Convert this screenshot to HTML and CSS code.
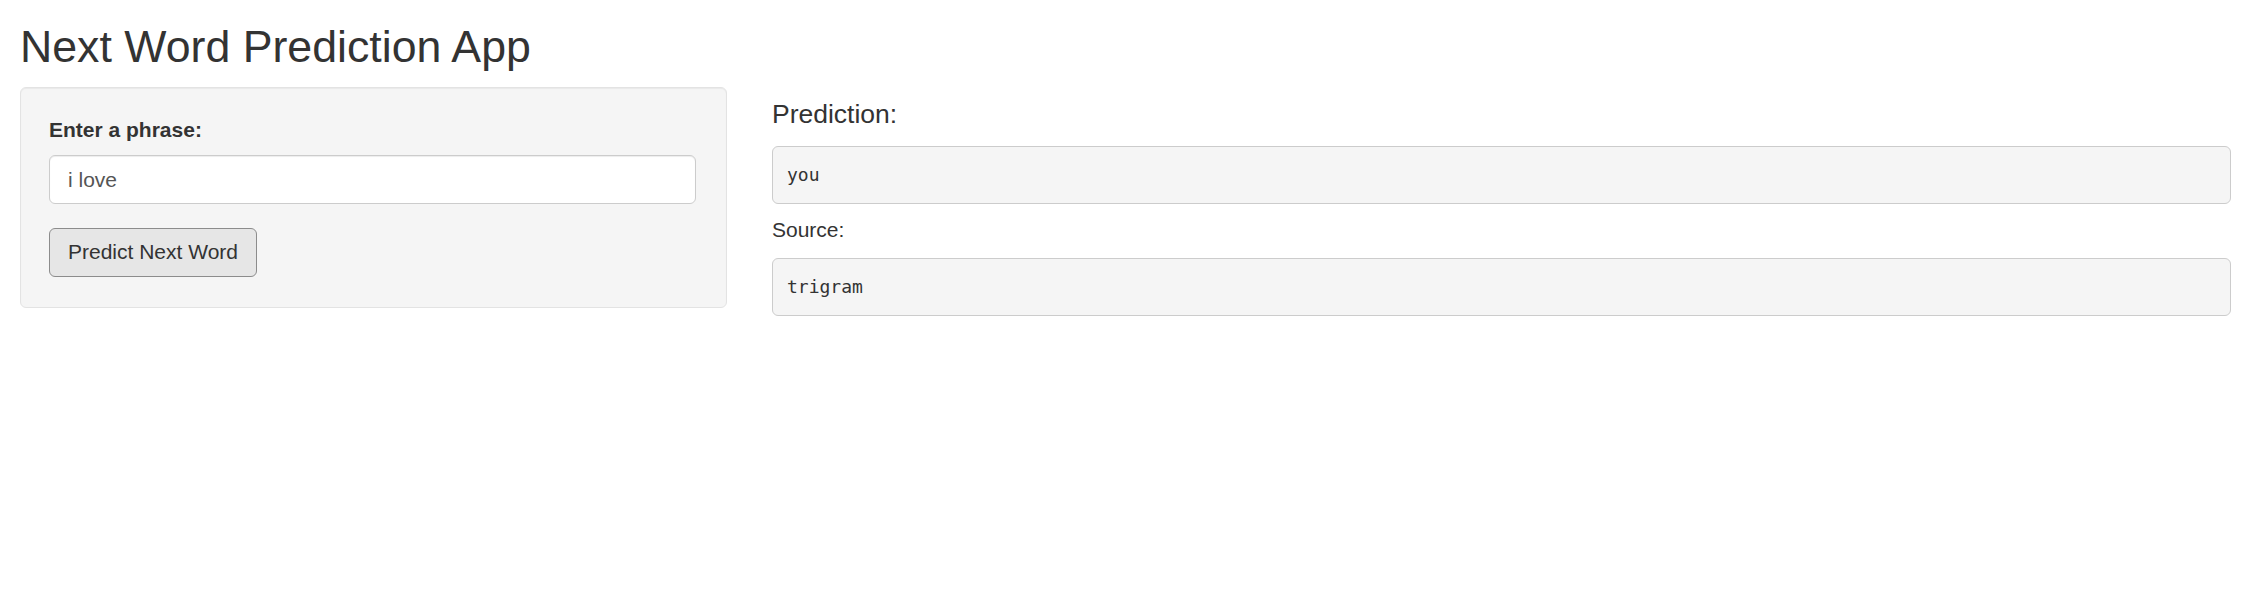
FILE: index.html
```html
<!DOCTYPE html>
<html lang="en">
<head>
<meta charset="utf-8">
<title>Next Word Prediction App</title>
<link rel="stylesheet" href="styles.css">
</head>
<body>
<div class="page">
  <h2 class="title">Next Word Prediction App</h2>
  <div class="row">
    <div class="well">
      <div class="form-group">
        <label class="control-label" for="phrase">Enter a phrase:</label>
        <input id="phrase" class="form-control" type="text" value="i love">
      </div>
      <button class="btn" type="button">Predict Next Word</button>
    </div>
    <div class="main">
      <h4 class="section-title">Prediction:</h4>
      <pre class="output">you</pre>
      <div class="plain">Source:</div>
      <pre class="output">trigram</pre>
    </div>
  </div>
</div>
</body>
</html>
```
FILE: styles.css
```css
* { box-sizing: border-box; }
html, body {
  margin: 0;
  padding: 0;
  background: #fff;
}
body {
  font-family: "Liberation Sans", Arial, Helvetica, sans-serif;
  font-size: 21px;
  line-height: 30px;
  color: #333;
}
.page {
  padding: 0 21px 0 20px;
}
.title {
  font-size: 44.7px;
  font-weight: 500;
  line-height: 49px;
  margin: 22px 0 16px 0;
  color: #333;
}
.row {
  display: grid;
  grid-template-columns: 707px 1fr;
  column-gap: 45px;
  align-items: start;
}
.well {
  background: #f5f5f5;
  border: 1px solid #e3e3e3;
  border-radius: 6px;
  box-shadow: inset 0 1px 1px rgba(0,0,0,.05);
  padding: 29px 30px 30px 28px;
}
.form-group {
  display: flex;
  flex-direction: column;
  margin-bottom: 24px;
}
.control-label {
  font-weight: bold;
  font-size: 21px;
  line-height: 25px;
  margin-bottom: 13px;
}
.form-control {
  height: 49px;
  width: 100%;
  padding: 9px 18px;
  font-family: "Liberation Sans", Arial, sans-serif;
  font-size: 21px;
  line-height: 30px;
  color: #555;
  background: #fff;
  border: 1px solid #ccc;
  border-radius: 6px;
  box-shadow: inset 0 1px 1px rgba(0,0,0,.075);
  outline: none;
}
.btn {
  display: inline-block;
  height: 49px;
  padding: 8px 18px 9px;
  font-family: "Liberation Sans", Arial, sans-serif;
  font-size: 21px;
  line-height: 30px;
  color: #333;
  background: #e6e6e6;
  border: 1px solid #8c8c8c;
  border-radius: 6px;
}
.main {
  display: flex;
  flex-direction: column;
}
.section-title {
  font-size: 26.5px;
  font-weight: 500;
  line-height: 29px;
  margin: 13px 0 17px 0;
}
.output {
  margin: 0;
  height: 58px;
  padding: 14px 14px;
  font-family: "DejaVu Sans Mono", "Liberation Mono", monospace;
  font-size: 18px;
  line-height: 28px;
  color: #333;
  background: #f5f5f5;
  border: 1px solid #ccc;
  border-radius: 6px;
}
.plain {
  margin: 11px 0 13px 0;
  line-height: 30px;
}
```
